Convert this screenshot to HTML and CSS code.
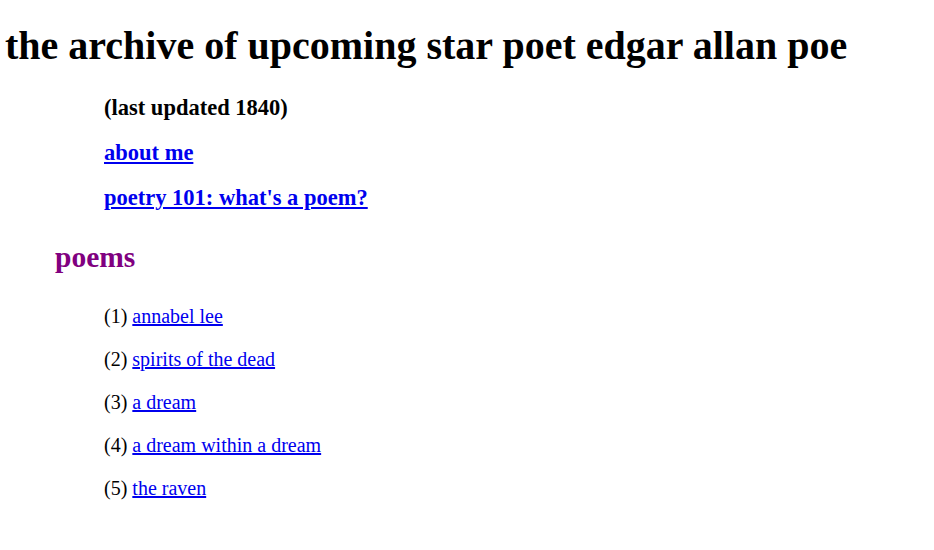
FILE: index.html
```html
<!DOCTYPE html>
<html>
<head>
<meta charset="utf-8">
<link rel="stylesheet" href="styles.css">
</head>
<body>
<h1 class="title">the archive of upcoming star poet edgar allan poe</h1>
<div class="meta">
  <p class="meta-line">(last updated 1840)</p>
  <p class="meta-line"><a href="#">about me</a></p>
  <p class="meta-line"><a href="#">poetry 101: what's a poem?</a></p>
</div>
<h2 class="section">poems</h2>
<ul class="poems">
  <li>(1) <a href="#">annabel lee</a></li>
  <li>(2) <a href="#">spirits of the dead</a></li>
  <li>(3) <a href="#">a dream</a></li>
  <li>(4) <a href="#">a dream within a dream</a></li>
  <li>(5) <a href="#">the raven</a></li>
</ul>
</body>
</html>
```
FILE: styles.css
```css
body {
  margin: 0;
  padding: 0 5px;
  font-family: "Liberation Serif", "Times New Roman", serif;
  color: #000;
  background: #fff;
}
a { color: #0000ee; }
.title {
  font-size: 40px;
  font-weight: bold;
  line-height: 44px;
  margin: 24px 0 0 0;
}
.meta {
  padding-left: 99px;
  margin-top: 27px;
}
.meta-line {
  font-size: 22.5px;
  font-weight: bold;
  line-height: 26px;
  margin: 0 0 19px 0;
}
.section {
  color: #800080;
  font-size: 29.5px;
  font-weight: bold;
  margin: 29px 0 0 50px;
  line-height: 34px;
}
.poems {
  list-style: none;
  padding-left: 99px;
  margin: 31px 0 0 0;
}
.poems li {
  font-size: 20px;
  line-height: 22px;
  margin-bottom: 21px;
}
```
